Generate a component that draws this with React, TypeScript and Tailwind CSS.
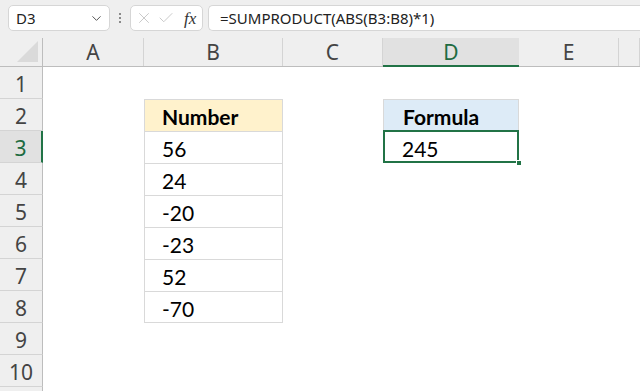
import { Check, ChevronDown, X } from 'lucide-react'

const cols = ['A', 'B', 'C', 'D', 'E', '']
const colW = ['w-[101px]', 'w-[139px]', 'w-[100px]', 'w-[136px]', 'w-[100px]', 'w-[21px]']
const numbers = ['56', '24', '-20', '-23', '52', '-70']

function Cell({ row, col }: { row: number; col: number }) {
  const base = `h-[32px] shrink-0 ${colW[col]}`
  const cellFont = "font-['Lato',_sans-serif] text-[21px] text-black"

  // column B: Number table, rows 2..8
  if (col === 1 && row >= 2 && row <= 8) {
    const isHead = row === 2
    return (
      <div
        className={`${base} ${cellFont} flex items-center pl-[17px] pt-[3px] border-l border-r border-t border-[#d9d9d9] ${
          row === 8 ? 'border-b' : ''
        } ${isHead ? 'bg-[#fff2cc] font-bold' : 'bg-white'}`}
      >
        {isHead ? 'Number' : numbers[row - 3]}
      </div>
    )
  }

  if (col === 3 && row === 2) {
    return (
      <div
        className={`${base} ${cellFont} flex items-center pl-[19px] pt-[3px] border-l border-r border-t border-[#d9d9d9] bg-[#ddebf7] font-bold`}
      >
        Formula
      </div>
    )
  }

  if (col === 3 && row === 3) {
    return (
      <div className={`${base} ${cellFont} relative flex items-center pl-[19px] pt-[3px] bg-white`}>
        245
        <div className="absolute -top-px left-0 right-0 bottom-0 border-2 border-[#217346]" />
        <div className="absolute -right-[3px] -bottom-[3px] w-[6px] h-[6px] bg-[#217346] border border-white" />
      </div>
    )
  }

  return <div className={base} />
}

export default function App() {
  const rows = [1, 2, 3, 4, 5, 6, 7, 8, 9, 10, 11]

  return (
    <div className="w-[640px] h-[391px] overflow-hidden bg-white font-['Noto_Sans',_sans-serif]">
      {/* formula bar */}
      <div className="h-[38px] bg-[#efefef] flex items-start pt-[5px] pl-[8px]">
        <div className="w-[102px] h-[26px] bg-white border border-[#d6d6d6] rounded-[5px] flex items-center justify-between pl-[7px] pr-[5px] text-[15px] text-[#222]">
          <span>D3</span>
          <ChevronDown className="w-[15px] h-[15px] text-[#555]" strokeWidth={1.6} />
        </div>
        <div className="w-[20px] h-[26px] flex flex-col items-center justify-center gap-[2px]">
          <span className="w-[2px] h-[2px] bg-[#8a8a8a]" />
          <span className="w-[2px] h-[2px] bg-[#8a8a8a]" />
          <span className="w-[2px] h-[2px] bg-[#8a8a8a]" />
        </div>
        <div className="w-[73px] h-[26px] bg-white border border-[#d6d6d6] rounded-[5px] flex items-center pl-[4px] gap-[4px]">
          <X className="w-[18px] h-[18px] text-[#c4c4c4]" strokeWidth={1.2} />
          <Check className="w-[18px] h-[18px] text-[#c4c4c4]" strokeWidth={1.2} />
          <span className="ml-[5px] font-['Liberation_Serif',_serif] italic text-[17px] text-[#333] leading-none">
            fx
          </span>
        </div>
        <div className="ml-[5px] flex-1 h-[26px] bg-white border border-[#d6d6d6] rounded-l-[5px] border-r-0 flex items-center pl-[11px] text-[15px] text-[#222]">
          =SUMPRODUCT(ABS(B3:B8)*1)
        </div>
      </div>

      {/* column headers */}
      <div className="flex h-[29px] bg-[#efefef] border-b border-[#bdbdbd]">
        <div className="w-[43px] shrink-0 border-r border-[#bdbdbd] relative">
          <div className="absolute right-[4px] bottom-[4px] w-0 h-0 border-l-[21px] border-l-transparent border-b-[21px] border-b-[#dadada]" />
        </div>
        {cols.map((c, i) => (
          <div
            key={i}
            className={`${colW[i]} shrink-0 flex items-center justify-center text-[21px] pt-[2px] ${
              c === 'D'
                ? 'bg-[#e1e1e1] text-[#1e6b41] border-b-2 border-[#217346] -mb-px'
                : 'text-[#444] border-r border-[#d4d4d4]'
            }`}
          >
            {c}
          </div>
        ))}
      </div>

      {/* grid rows */}
      {rows.map((r) => (
        <div key={r} className="flex">
          <div
            className={`w-[43px] h-[32px] shrink-0 flex items-center justify-center text-[21px] pt-[4px] border-b border-[#d4d4d4] ${
              r === 3
                ? 'bg-[#e1e1e1] text-[#1e6b41] border-r-2 border-r-[#217346]'
                : 'bg-[#efefef] text-[#444] border-r border-r-[#bdbdbd]'
            }`}
          >
            {r < 11 ? r : ''}
          </div>
          {cols.map((_, i) => (
            <Cell key={i} row={r} col={i} />
          ))}
        </div>
      ))}
    </div>
  )
}
